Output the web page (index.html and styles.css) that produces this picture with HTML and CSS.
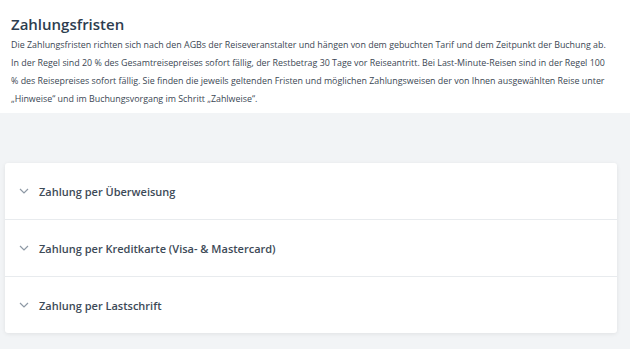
FILE: index.html
```html
<!DOCTYPE html>
<html lang="de">
<head>
  <meta charset="UTF-8">
  <title>Zahlungsfristen</title>
  <link rel="stylesheet" href="styles.css">
</head>
<body>

  <section class="intro">
    <h2>Zahlungsfristen</h2>
    <p>
      Die Zahlungsfristen richten sich nach den AGBs der Reiseveranstalter und hängen von dem gebuchten Tarif und dem Zeitpunkt der Buchung ab.<br>
      In der Regel sind 20 % des Gesamtreisepreises sofort fällig, der Restbetrag 30 Tage vor Reiseantritt. Bei Last-Minute-Reisen sind in der Regel 100<br>
      % des Reisepreises sofort fällig. Sie finden die jeweils geltenden Fristen und möglichen Zahlungsweisen der von Ihnen ausgewählten Reise unter<br>
      „Hinweise“ und im Buchungsvorgang im Schritt „Zahlweise“.
    </p>
  </section>

  <section class="payments">
    <div class="card">
      <div class="row">
        <svg class="chev" width="10" height="6" viewBox="0 0 10 6"><path d="M1 1l4 4 4-4" fill="none" stroke="#8e99a5" stroke-width="1.2"/></svg>
        <span>Zahlung per Überweisung</span>
      </div>
      <div class="row">
        <svg class="chev" width="10" height="6" viewBox="0 0 10 6"><path d="M1 1l4 4 4-4" fill="none" stroke="#8e99a5" stroke-width="1.2"/></svg>
        <span>Zahlung per Kreditkarte (Visa- &amp; Mastercard)</span>
      </div>
      <div class="row">
        <svg class="chev" width="10" height="6" viewBox="0 0 10 6"><path d="M1 1l4 4 4-4" fill="none" stroke="#8e99a5" stroke-width="1.2"/></svg>
        <span>Zahlung per Lastschrift</span>
      </div>
    </div>
  </section>

</body>
</html>
```

FILE: styles.css
```css
body {
  margin: 0;
  font-family: "Open Sans", sans-serif;
  color: #3b4754;
  background: #f2f4f6;
}
.intro {
  background: #fff;
  padding: 14px 11px 5px;
}
.intro h2 {
  margin: 0 0 2px;
  font-size: 15px;
  font-weight: 600;
  color: #2d3d4f;
  line-height: 20px;
}
.intro p {
  margin: 0;
  font-size: 8.9px;
  line-height: 18px;
  white-space: nowrap;
}
.payments {
  padding: 50px 13px 16px 5px;
}
.card {
  background: #fff;
  border-radius: 3px;
  box-shadow: 0 1px 4px rgba(0, 0, 0, 0.08);
}
.row {
  display: flex;
  align-items: center;
  gap: 10px;
  height: 56px;
  padding-left: 14px;
  font-size: 11px;
  font-weight: 600;
  color: #3d4a57;
  border-top: 1px solid #e8ebee;
}
.row:first-child {
  border-top: 0;
}
```
